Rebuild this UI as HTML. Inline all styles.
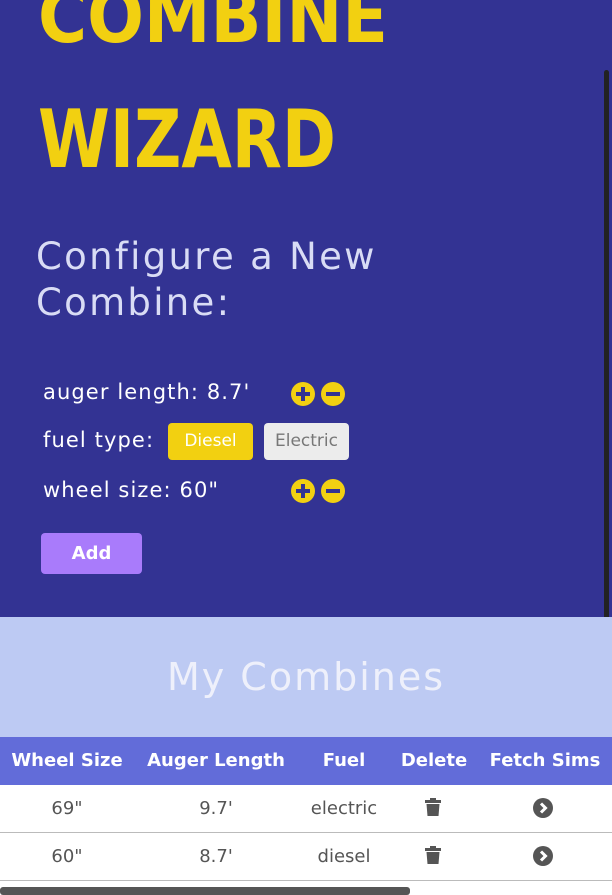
<!DOCTYPE html>
<html><head><style>
body{margin:0;width:612px;height:895px;overflow:hidden;font-family:"DejaVu Sans",sans-serif;background:#fff;position:relative}
.top{position:absolute;left:0;top:0;width:612px;height:617px;background:#333393}
.t{position:absolute;color:#fff;font-size:21px;letter-spacing:1.1px}
.h2{position:absolute;left:36px;top:234px;color:#d9dcf5;font-size:37px;line-height:46px;letter-spacing:2.3px}
.ic{position:absolute;width:24px;height:24px;border-radius:50%;background:#f2d011}
.ic:before{content:"";position:absolute;left:5px;top:10px;width:14px;height:4px;background:#333393}
.plus:after{content:"";position:absolute;left:10px;top:5px;width:4px;height:14px;background:#333393}
.btn{position:absolute;border-radius:4px;font-size:17px;text-align:center}
.mid{position:absolute;left:0;top:617px;width:612px;height:120px;background:#bdcaf3;color:#eef0fb;font-size:38px;text-align:center;line-height:120px;letter-spacing:2px}
.hd{position:absolute;left:0;top:737px;width:612px;height:48px;background:#626cd9;color:#fff;font-weight:bold;font-size:18px}
.hd span,.row span{position:absolute;top:0;line-height:48px;transform:translateX(-50%);white-space:nowrap}
.row{position:absolute;left:0;width:612px;height:47px;border-bottom:1px solid #bbb;color:#555;font-size:18px}
.trash{position:absolute;width:16px;height:18px}
</style></head><body>
<div class="top">
<svg width="612" height="200" style="position:absolute;left:0;top:0">
<text x="38" y="42" textLength="350" lengthAdjust="spacingAndGlyphs" font-family="DejaVu Sans" font-weight="bold" font-size="74" fill="#f2d011">COMBINE</text>
<text x="38" y="167" textLength="298" lengthAdjust="spacingAndGlyphs" font-family="DejaVu Sans" font-weight="bold" font-size="80" fill="#f2d011">WIZARD</text>
</svg>
<div class="h2">Configure a New<br>Combine:</div>
<div class="t" style="left:43px;top:380px">auger length: 8.7'</div>
<div class="ic plus" style="left:291px;top:382px"></div><div class="ic" style="left:321px;top:382px"></div>
<div class="t" style="left:43px;top:428px">fuel type:</div>
<div class="btn" style="left:168px;top:423px;width:85px;height:37px;line-height:37px;background:#f2d011;color:#fff">Diesel</div>
<div class="btn" style="left:264px;top:423px;width:85px;height:37px;line-height:37px;background:#ececec;color:#777">Electric</div>
<div class="t" style="left:43px;top:478px">wheel size: 60"</div>
<div class="ic plus" style="left:291px;top:479px"></div><div class="ic" style="left:321px;top:479px"></div>
<div class="btn" style="left:41px;top:533px;width:101px;height:41px;line-height:41px;background:#a97bfb;color:#fff;font-weight:bold;font-size:18px">Add</div>
<div style="position:absolute;left:604px;top:70px;width:5px;height:556px;background:#222;border-radius:3px"></div>
</div>
<div class="mid">My Combines</div>
<div class="hd"><span style="left:67px">Wheel Size</span><span style="left:216px">Auger Length</span><span style="left:344px">Fuel</span><span style="left:434px">Delete</span><span style="left:545px">Fetch Sims</span></div>
<div class="row" style="top:785px"><span style="left:67px">69"</span><span style="left:216px">9.7'</span><span style="left:344px">electric</span></div>
<div class="row" style="top:833px"><span style="left:67px">60"</span><span style="left:216px">8.7'</span><span style="left:344px">diesel</span></div>
<svg class="trash" style="left:425px;top:798px" viewBox="0 0 16 18"><rect x="0" y="2" width="16" height="3" fill="#555"/><rect x="5" y="0" width="6" height="3" fill="#555"/><path d="M1.5 6h13l-1 12h-11z" fill="#555"/></svg>
<svg class="trash" style="left:425px;top:846px" viewBox="0 0 16 18"><rect x="0" y="2" width="16" height="3" fill="#555"/><rect x="5" y="0" width="6" height="3" fill="#555"/><path d="M1.5 6h13l-1 12h-11z" fill="#555"/></svg>
<svg style="position:absolute;left:533px;top:798px" width="20" height="20"><circle cx="10" cy="10" r="10" fill="#555"/><path d="M8 5.5l4.5 4.5-4.5 4.5" stroke="#fff" stroke-width="3" fill="none"/></svg>
<svg style="position:absolute;left:533px;top:846px" width="20" height="20"><circle cx="10" cy="10" r="10" fill="#555"/><path d="M8 5.5l4.5 4.5-4.5 4.5" stroke="#fff" stroke-width="3" fill="none"/></svg>
<div style="position:absolute;left:0;top:887px;width:410px;height:8px;background:#555;border-radius:3px"></div>
</body></html>
